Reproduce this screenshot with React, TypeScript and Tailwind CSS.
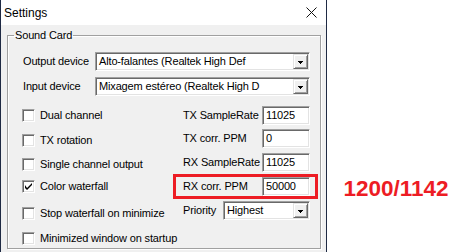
import React from "react";

const sunken =
  "border border-t-[#a0a0a0] border-l-[#a0a0a0] border-b-white border-r-white shadow-[inset_1px_1px_0_#696969,inset_-1px_-1px_0_#e3e3e3] bg-white";

function Arrow() {
  return (
    <div className="w-[15px] h-full border border-t-[#e3e3e3] border-l-[#e3e3e3] border-b-[#696969] border-r-[#696969] shadow-[inset_1px_1px_0_white,inset_-1px_-1px_0_#a0a0a0] bg-[#f0f0f0] flex items-center justify-center">
      <svg width="7" height="4" viewBox="0 0 7 4">
        <rect x="1" y="1" width="5" height="1" fill="black" />
        <rect x="2" y="2" width="3" height="1" fill="black" />
        <rect x="3" y="3" width="1" height="1" fill="black" />
      </svg>
    </div>
  );
}

function Combo({ text, w }: { text: string; w: string }) {
  return (
    <div className={`${sunken} ${w} h-[19px] flex items-stretch p-[1px]`}>
      <div className="flex-1 pl-[2px] flex items-center overflow-hidden whitespace-nowrap leading-none">
        {text}
      </div>
      <Arrow />
    </div>
  );
}

function Check({ label, checked, mt }: { label: string; checked?: boolean; mt: string }) {
  return (
    <div className={`flex items-center h-[13px] ${mt}`}>
      <div className={`${sunken} w-[13px] h-[13px] flex items-center justify-center shrink-0`}>
        {checked && (
          <svg width="7" height="7" viewBox="0 0 7 7">
            <path d="M0 2v3l2 2l5-5v-2l-5 5z" fill="black" />
          </svg>
        )}
      </div>
      <span className="ml-[5px] whitespace-nowrap leading-none">{label}</span>
    </div>
  );
}

function Field({ label, value, mt }: { label: string; value: string; mt: string }) {
  return (
    <div className={`flex items-center h-[19px] ${mt}`}>
      <span className="w-[79px] whitespace-nowrap">{label}</span>
      <div className={`${sunken} w-[48px] h-[19px] flex items-center pl-[3px] leading-none`}>{value}</div>
    </div>
  );
}

export default function App() {
  return (
    <div className="relative w-[465px] h-[252px] bg-white flex overflow-hidden font-['Liberation_Sans',Arial,sans-serif] text-[11px] tracking-[-0.15px] text-black">
      <div className="w-[327px] h-full border-x border-[#1f2a44] flex flex-col shrink-0">
        <div className="h-[25px] bg-white flex items-center justify-between pl-[3px] pr-[9px] shrink-0">
          <span className="text-[12px] tracking-normal">Settings</span>
          <svg width="11" height="11" viewBox="0 0 11 11">
            <path d="M0.5 0.5L10.5 10.5M10.5 0.5L0.5 10.5" stroke="#111" strokeWidth="1" />
          </svg>
        </div>
        <div className="flex-1 bg-[#f0f0f0] pl-[6px] pr-[5px] pt-[4px]">
          <fieldset className="h-[220px] border border-[#a0a0a0] shadow-[inset_1px_1px_0_white,1px_1px_0_white]">
            <legend className="ml-[6px] px-[1px] leading-[13px]">Sound Card</legend>
            <div className="pt-[10px] pl-[15px] flex items-center">
              <span className="w-[72px] whitespace-nowrap">Output device</span>
              <Combo text="Alto-falantes (Realtek High Def" w="w-[215px]" />
            </div>
            <div className="mt-[6px] pl-[15px] flex items-center">
              <span className="w-[72px] whitespace-nowrap">Input device</span>
              <Combo text="Mixagem estéreo (Realtek High D" w="w-[215px]" />
            </div>
            <div className="flex">
              <div className="pl-[14px] w-[175px] flex flex-col">
                <Check label="Dual channel" mt="mt-[13px]" />
                <Check label="TX rotation" mt="mt-[12px]" />
                <Check label="Single channel output" mt="mt-[11px]" />
                <Check label="Color waterfall" checked mt="mt-[9px]" />
                <Check label="Stop waterfall on minimize" mt="mt-[14px]" />
                <Check label="Minimized window on startup" mt="mt-[12px]" />
              </div>
              <div className="flex flex-col">
                <Field label="TX SampleRate" value="11025" mt="mt-[10px]" />
                <Field label="TX corr. PPM" value="0" mt="mt-[4px]" />
                <Field label="RX SampleRate" value="11025" mt="mt-[5px]" />
                <Field label="RX corr. PPM" value="50000" mt="mt-[5px]" />
                <div className="flex items-center h-[19px] mt-[5px]">
                  <span className="w-[40px]">Priority</span>
                  <Combo text="Highest" w="w-[87px]" />
                </div>
              </div>
            </div>
          </fieldset>
        </div>
      </div>
      <div className="flex-1 flex justify-center pt-[176px]">
        <span className="text-[22.5px] leading-[26px] font-bold tracking-normal text-[#ed1c24]">1200/1142</span>
      </div>
      <div className="absolute left-[173px] top-[174px] w-[145px] h-[25px] border-[3px] border-[#ed1c24]" />
    </div>
  );
}
